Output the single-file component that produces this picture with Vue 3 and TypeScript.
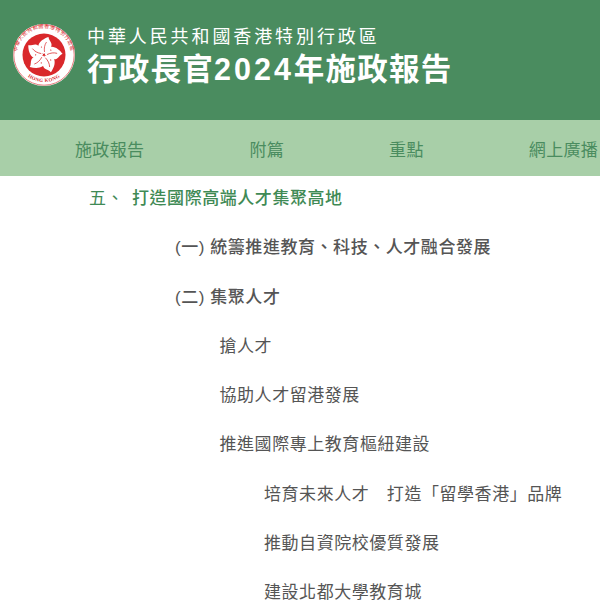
<script setup lang="ts">
const navItems: string[] = ['施政報告', '附篇', '重點', '網上廣播']
const petals: number[] = [0, 72, 144, 216, 288]

const subItems: { text: string; level: number }[] = [
	{ text: '搶人才', level: 1 },
	{ text: '協助人才留港發展', level: 1 },
	{ text: '推進國際專上教育樞紐建設', level: 1 },
	{ text: '培育未來人才　打造「留學香港」品牌', level: 2 },
	{ text: '推動自資院校優質發展', level: 2 },
	{ text: '建設北都大學教育城', level: 2 },
]
</script>

<template>
	<div class="page" lang="zh-Hant">
		<header class="banner">
			<svg class="emblem" width="64" height="64" viewBox="0 0 64 64">
				<defs>
					<path id="top-arc" d="M6.5 41 A27 27 0 1 1 57.5 41" />
					<path id="bottom-arc" d="M7 43 A27.5 27.5 0 0 0 57 43" />
				</defs>
				<circle cx="32" cy="32" r="31" fill="#fff" />
				<circle cx="32" cy="32" r="30.2" fill="none" stroke="#d9282b" stroke-width=".6" />
				<text class="ring-cn">
					<textPath href="#top-arc" startOffset="50%" text-anchor="middle">中華人民共和國香港特別行政區</textPath>
				</text>
				<text class="ring-en">
					<textPath href="#bottom-arc" startOffset="50%" text-anchor="middle">HONG KONG</textPath>
				</text>
				<circle cx="32" cy="32" r="21.5" fill="#d9282b" />
				<g v-for="a in petals" :key="a" :transform="`rotate(${a} 32 32)`">
					<path d="M32 31 C27 29.5 25 26 26.5 22 C28 18 32 15.5 36.5 14 C36.5 16.5 39 18.5 39.5 21 C40 25 36 28 32 31 Z" fill="#fff" />
					<path d="M32.5 29 C32 25 32.5 22 34.5 19" stroke="#d9282b" stroke-width=".7" fill="none" />
					<circle cx="29.5" cy="24" r=".6" fill="#d9282b" />
				</g>
			</svg>
			<div class="titles">
				<div class="region">中華人民共和國香港特別行政區</div>
				<div class="title">行政長官<span class="digits">2024</span>年施政報告</div>
			</div>
		</header>

		<nav class="nav">
			<span v-for="n in navItems" :key="n" class="nav-item">{{ n }}</span>
		</nav>

		<main class="content">
			<div class="row chapter">
				<span class="num">五、</span>
				<span class="strong">打造國際高端人才集聚高地</span>
			</div>
			<div class="row section">(一) 統籌推進教育、科技、人才融合發展</div>
			<div class="row section">(二) 集聚人才</div>
			<div
				v-for="s in subItems"
				:key="s.text"
				class="row item"
				:class="`level-${s.level}`"
			>{{ s.text }}</div>
		</main>
	</div>
</template>

<style>
body { overflow: hidden; background: #fff; }
</style>

<style scoped>
.page
{
	width: 600px;
	height: 610px;
	overflow: hidden;
	font-family: "Liberation Sans", "Noto Sans CJK TC", sans-serif;
}

.banner
{
	display: flex;
	align-items: center;
	gap: 11px;
	height: 120px;
	box-sizing: border-box;
	padding: 0 0 7px 12px;
	background: #4a8c5f;
	color: #fff;
}

.emblem
{
	flex: none;
	margin-bottom: 3px;
}

.ring-cn { font-size: 5px; fill: #d9282b; letter-spacing: .55px; }
.ring-en { font: bold 5px "Liberation Serif", serif; fill: #d9282b; letter-spacing: .3px; }

.region
{
	font-size: 18px;
	line-height: 24px;
	letter-spacing: 2.9px;
}

.title
{
	font-size: 30.5px;
	line-height: 40px;
	font-weight: bold;
	letter-spacing: 1.25px;
}

.digits { letter-spacing: 3px; }

.nav
{
	display: flex;
	align-items: center;
	gap: 105px;
	height: 56px;
	padding-left: 75px;
	background: #a8cfa8;
}

.nav-item
{
	flex: none;
	font-size: 17px;
	letter-spacing: .35px;
	color: #4a8c5f;
}

.content
{
	color: #555;
	font-size: 17px;
	letter-spacing: .55px;
}

.row
{
	height: 49.25px;
	line-height: 45px;
	white-space: nowrap;
}

.chapter
{
	display: flex;
	color: #3f8a55;
	padding-left: 89px;
}

.num { width: 43px; }
.strong { font-weight: 500; }

.section
{
	padding-left: 175px;
	font-weight: 500;
}

.level-1 { padding-left: 219.5px; }
.level-2 { padding-left: 264px; }
</style>
